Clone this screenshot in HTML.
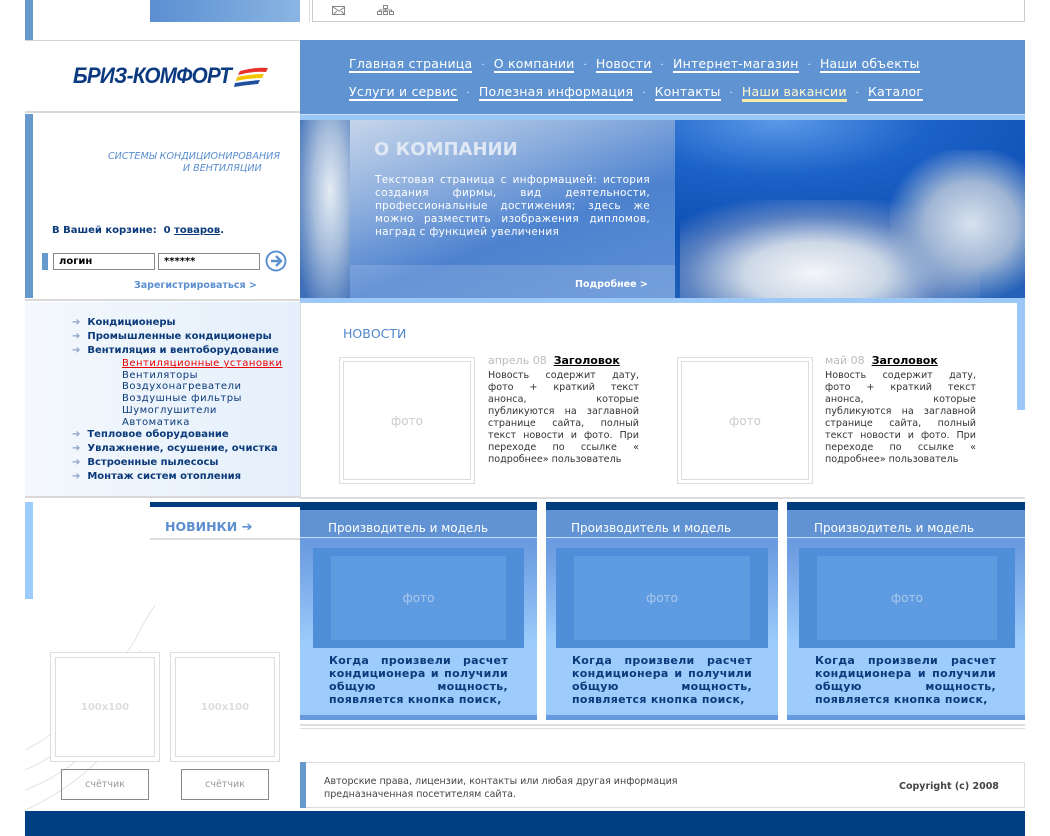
<!DOCTYPE html>
<html><head><meta charset="utf-8"><style>
*{margin:0;padding:0;box-sizing:border-box}
body{width:1050px;height:836px;background:#fff;position:relative;overflow:hidden;font-family:"DejaVu Sans","Liberation Sans",sans-serif;}
.a{position:absolute}
.nav{color:#fff;font-size:12.5px;white-space:nowrap;letter-spacing:.2px}
.nav span.l{border-bottom:2px solid #fff;padding-bottom:0}
.nav span.d{margin:0 9px;font-size:10px}
.menu{font-size:10px;font-weight:bold;color:#0b3a7a;line-height:14px}
.sub{font-size:10px;color:#0b3a7a;line-height:11.7px;letter-spacing:.5px}
.pt{font-size:11px;line-height:13px;color:#0b3a7a;font-weight:bold;text-align:justify;letter-spacing:.3px}
.nt{font-size:9.6px;line-height:12px;color:#333;text-align:justify}
.ph{height:28px;padding-top:10px;line-height:16px;border-bottom:1px solid #c8dcf5;color:#fff;font-size:12px;background:#6193d4}
</style></head><body>
<!-- top -->
<div class="a" style="left:25px;top:0;width:8px;height:40px;background:#6699cc"></div>
<div class="a" style="left:150px;top:0;width:150px;height:22px;background:linear-gradient(90deg,#5b8fd2,#8ab5e3)"></div>
<div class="a" style="left:312px;top:0;width:713px;height:22px;border:1px solid #ccc;border-top:none"></div>
<div class="a" style="left:309px;top:0;width:1px;height:22px;background:#ddd"></div>
<svg class="a" style="left:332px;top:6px" width="14" height="10"><rect x=".5" y=".5" width="12" height="8" fill="none" stroke="#888"/><path d="M1 1l6 4 6-4M1 9l4-4M13 9l-4-4" stroke="#888" fill="none"/></svg>
<svg class="a" style="left:377px;top:5px" width="18" height="11"><g fill="none" stroke="#888"><rect x="6.5" y=".5" width="4" height="3"/><rect x=".5" y="6.5" width="4" height="3"/><rect x="6.5" y="6.5" width="4" height="3"/><rect x="12.5" y="6.5" width="4" height="3"/><path d="M8.5 3.5v3M2.5 6.5V5h12v1.5"/></g></svg>
<div class="a" style="left:25px;top:40px;width:275px;height:1px;background:#d4d4d4"></div>
<!-- logo -->
<div class="a" style="left:73px;top:63px;font:italic bold 22px 'Liberation Sans',sans-serif;color:#0c3a80;letter-spacing:-.8px;transform:scaleX(.94);transform-origin:left;white-space:nowrap">БРИЗ-КОМФОРТ</div>
<svg class="a" style="left:234px;top:67px" width="36" height="22"><path d="M6 4 Q20 0 34 1 L32 5 Q18 4 4 8Z" fill="#e8322b"/><path d="M3 10 Q16 7 30 7 L28 11 Q16 11 2 14Z" fill="#f5c400"/><path d="M1 16 Q14 14 26 13 L24 17 Q12 18 0 20Z" fill="#1e4f9c"/></svg>
<div class="a" style="left:25px;top:111px;width:275px;height:2px;background:#d8d8d8"></div>
<!-- nav -->
<div class="a" style="left:300px;top:40px;width:725px;height:74px;background:#5f93d2"></div>
<div class="a" style="left:300px;top:114px;width:725px;height:6px;background:#9cc8f7;border-top:1px solid #c8e0fa"></div>
<div class="a nav" style="left:349px;top:56px"><span class="l">Главная страница</span><span class="d">·</span><span class="l">О компании</span><span class="d">·</span><span class="l">Новости</span><span class="d">·</span><span class="l">Интернет-магазин</span><span class="d">·</span><span class="l">Наши объекты</span></div>
<div class="a nav" style="left:349px;top:84px"><span class="l">Услуги и сервис</span><span class="d">·</span><span class="l">Полезная информация</span><span class="d">·</span><span class="l">Контакты</span><span class="d">·</span><span class="l" style="border-bottom:3px solid #f8eba8;color:#fff8d0">Наши вакансии</span><span class="d">·</span><span class="l">Каталог</span></div>
<!-- hero -->
<div class="a" style="left:300px;top:120px;width:725px;height:178px;background:radial-gradient(ellipse at 66% 0%,#5a9ae8 0%,#1d62c8 22%,#0e50b6 45%,#1d5db8 70%,#3a6cb4 100%)"></div>
<div class="a" style="left:680px;top:200px;width:300px;height:98px;background:radial-gradient(ellipse at 45% 75%,#f4f6fa 0%,#cdd8e6 30%,rgba(140,160,200,.6) 55%,rgba(40,100,190,0) 78%)"></div>
<div class="a" style="left:890px;top:150px;width:135px;height:148px;background:radial-gradient(ellipse at 60% 50%,#d8e2ee 0%,#a0b6d4 40%,rgba(60,110,190,0) 75%)"></div>
<div class="a" style="left:300px;top:120px;width:50px;height:178px;background:radial-gradient(ellipse at 60% 40%,#e4ecf4 0%,#a8bedc 40%,#3f6fb8 90%)"></div>
<div class="a" style="left:350px;top:120px;width:325px;height:178px;background:linear-gradient(160deg,#c6d5ea 0%,#8fb0de 30%,#4d82cf 60%,#5b8fd5 100%)"></div>
<div class="a" style="left:350px;top:265px;width:325px;height:33px;background:rgba(255,255,255,.15)"></div>
<div class="a" style="left:374px;top:139px;font:bold 18px 'DejaVu Sans',sans-serif;color:#dfe8f4">О КОМПАНИИ</div>
<div class="a" style="left:375px;top:174px;width:275px;font-size:10.5px;line-height:13px;color:#fff;text-align:justify;letter-spacing:.3px">Текстовая страница с информацией: история создания фирмы, вид деятельности, профессиональные достижения; здесь же можно разместить изображения дипломов, наград с функцией увеличения</div>
<div class="a" style="left:575px;top:279px;font:bold 9.5px 'DejaVu Sans',sans-serif;color:#fff">Подробнее &gt;</div>
<div class="a" style="left:300px;top:298px;width:725px;height:5px;background:#9cc8f7"></div>
<!-- left panel -->
<div class="a" style="left:25px;top:114px;width:8px;height:184px;background:#6699cc"></div>
<div class="a" style="left:100px;top:151px;font:italic 9.6px 'DejaVu Sans',sans-serif;color:#5a8ed0;text-align:right;width:180px;line-height:12px">СИСТЕМЫ КОНДИЦИОНИРОВАНИЯ<br>И ВЕНТИЛЯЦИИ&nbsp;&nbsp;&nbsp;&nbsp;&nbsp;&nbsp;</div>
<div class="a" style="left:52px;top:225px;font:bold 10px 'DejaVu Sans',sans-serif;color:#0b3a7a">В Вашей корзине:&nbsp; 0 <u>товаров</u>.</div>
<div class="a" style="left:42px;top:253px;width:6px;height:17px;background:#6699cc"></div>
<div class="a" style="left:53px;top:253px;width:102px;height:17px;border:1px solid #888;font:bold 10px 'DejaVu Sans',sans-serif;padding:2px 5px;color:#000">логин</div>
<div class="a" style="left:158px;top:253px;width:102px;height:17px;border:1px solid #888;font:bold 10px 'DejaVu Sans',sans-serif;padding:2px 5px;color:#000">******</div>
<svg class="a" style="left:265px;top:250px" width="22" height="22"><circle cx="11" cy="11" r="9.5" fill="#fff" stroke="#5b8fd0" stroke-width="2"/><path d="M6 11h9M11 6l5 5-5 5" stroke="#5b8fd0" stroke-width="2.4" fill="none"/></svg>
<div class="a" style="left:134px;top:280px;font:bold 9.5px 'DejaVu Sans',sans-serif;color:#5b8fd0">Зарегистрироваться &gt;</div>
<div class="a" style="left:25px;top:299px;width:275px;height:2px;background:#d8d8d8"></div>
<!-- menu -->
<div class="a" style="left:25px;top:302px;width:275px;height:194px;background:linear-gradient(90deg,#f4f8fd,#e4effb)"></div>
<div class="a" style="left:25px;top:496px;width:275px;height:2px;background:#d8d8d8"></div>
<div class="a menu" style="left:72px;top:316px;width:230px">
<div><span style="color:#8aa4c8">➔</span>&nbsp; Кондиционеры</div>
<div><span style="color:#8aa4c8">➔</span>&nbsp; Промышленные кондиционеры</div>
<div><span style="color:#8aa4c8">➔</span>&nbsp; Вентиляция и вентоборудование</div>
<div class="sub" style="padding-left:50px;font-weight:normal"><div style="color:#e00;text-decoration:underline">Вентиляционные установки</div><div>Вентиляторы</div><div>Воздухонагреватели</div><div>Воздушные фильтры</div><div>Шумоглушители</div><div>Автоматика</div></div>
<div><span style="color:#8aa4c8">➔</span>&nbsp; Тепловое оборудование</div>
<div><span style="color:#8aa4c8">➔</span>&nbsp; Увлажнение, осушение, очистка</div>
<div><span style="color:#8aa4c8">➔</span>&nbsp; Встроенные пылесосы</div>
<div><span style="color:#8aa4c8">➔</span>&nbsp; Монтаж систем отопления</div>
</div>
<!-- news -->
<div class="a" style="left:300px;top:303px;width:1px;height:195px;background:#ddd"></div>
<div class="a" style="left:1017px;top:303px;width:8px;height:107px;background:#9cc8f7"></div>
<div class="a" style="left:343px;top:326px;font-size:12.5px;color:#4f86cc">НОВОСТИ</div>
<div class="a" style="left:339px;top:357px;width:136px;height:127px;border:1px solid #ddd;padding:3px"><div style="border:1px solid #ddd;height:100%;display:flex;align-items:center;justify-content:center;color:#ccc;font-size:12px">фото</div></div>
<div class="a" style="left:677px;top:357px;width:136px;height:127px;border:1px solid #ddd;padding:3px"><div style="border:1px solid #ddd;height:100%;display:flex;align-items:center;justify-content:center;color:#ccc;font-size:12px">фото</div></div>
<div class="a" style="left:488px;top:354px;font-size:11px;color:#bbb;white-space:nowrap">апрель 08&nbsp; <b style="color:#000;text-decoration:underline">Заголовок</b></div>
<div class="a" style="left:825px;top:354px;font-size:11px;color:#bbb;white-space:nowrap">май 08&nbsp; <b style="color:#000;text-decoration:underline">Заголовок</b></div>
<div class="a nt" style="left:488px;top:370px;width:151px">Новость содержит дату, фото + краткий текст анонса, которые публикуются на заглавной странице сайта, полный текст новости и фото. При переходе по ссылке « подробнее» пользователь</div>
<div class="a nt" style="left:825px;top:370px;width:151px">Новость содержит дату, фото + краткий текст анонса, которые публикуются на заглавной странице сайта, полный текст новости и фото. При переходе по ссылке « подробнее» пользователь</div>
<div class="a" style="left:300px;top:497px;width:725px;height:2px;background:#ddd"></div>
<!-- products -->
<div class="a" style="left:25px;top:502px;width:8px;height:97px;background:#9ccbfc"></div>
<div class="a" style="left:150px;top:502px;width:150px;height:5px;background:#003d7f"></div>
<div class="a" style="left:165px;top:519px;font:bold 12.5px 'DejaVu Sans',sans-serif;color:#5b8fd0">НОВИНКИ <span style="font-size:13px">➔</span></div>
<div class="a" style="left:150px;top:538px;width:150px;height:2px;background:#ddd"></div>
<div class="a" style="left:300px;top:724px;width:725px;height:2px;background:#ddd"></div>
<div class="a" style="left:300px;top:728px;width:725px;height:1px;background:#ddd"></div>
<!-- left thumbs -->
<svg class="a" style="left:25px;top:600px" width="275" height="211"><g fill="none" stroke="#e2e2e2"><path d="M0 150 Q60 120 110 40 Q120 20 130 5"/><path d="M0 170 Q70 140 115 50"/><path d="M0 190 Q80 160 125 60"/><path d="M0 210 Q90 170 135 70"/></g></svg>
<div class="a" style="left:50px;top:652px;width:110px;height:110px;border:1px solid #ddd;padding:4px;background:#fff"><div style="border:1px solid #ddd;height:100%;display:flex;align-items:center;justify-content:center;color:#ddd;font:bold 10px 'DejaVu Sans',sans-serif">100x100</div></div>
<div class="a" style="left:170px;top:652px;width:110px;height:110px;border:1px solid #ddd;padding:4px;background:#fff"><div style="border:1px solid #ddd;height:100%;display:flex;align-items:center;justify-content:center;color:#ddd;font:bold 10px 'DejaVu Sans',sans-serif">100x100</div></div>
<div class="a" style="left:61px;top:769px;width:88px;height:31px;border:1px solid #888;text-align:center;line-height:29px;font-size:9.5px;color:#999">счётчик</div>
<div class="a" style="left:181px;top:769px;width:88px;height:31px;border:1px solid #888;text-align:center;line-height:29px;font-size:9.5px;color:#999">счётчик</div>
<!-- footer -->
<div class="a" style="left:300px;top:762px;width:725px;height:46px;border:1px solid #ddd"></div>
<div class="a" style="left:300px;top:762px;width:6px;height:46px;background:#6699cc"></div>
<div class="a" style="left:324px;top:775px;font-size:9.5px;line-height:13px;color:#444">Авторские права, лицензии, контакты или любая другая информация<br>предназначенная посетителям сайта.</div>
<div class="a" style="left:899px;top:781px;font:bold 9.5px 'DejaVu Sans',sans-serif;color:#444">Copyright (c) 2008</div>
<div class="a" style="left:25px;top:811px;width:1000px;height:25px;background:#003f82"></div>
<div class="a" style="left:300px;top:502px;width:237px;height:218px;background:linear-gradient(#6b9be0 20%,#9ccbfc 65%)"><div style="height:8px;background:#003d7f"></div><div class="ph" style="padding-left:28px">Производитель и модель</div><div style="margin:10px 13px 0;height:100px;background:#4f8ed8;padding:8px 18px"><div style="background:#5f9be0;height:100%;display:flex;align-items:center;justify-content:center;color:#a9c8ee;font-size:12px">фото</div></div><div class="pt" style="margin:6px 29px 0">Когда произвели расчет кондиционера и получили общую мощность, появляется кнопка поиск,</div></div>
<div class="a" style="left:300px;top:715px;width:237px;height:5px;background:#6699dd"></div>
<div class="a" style="left:546px;top:502px;width:232px;height:218px;background:linear-gradient(#6b9be0 20%,#9ccbfc 65%)"><div style="height:8px;background:#003d7f"></div><div class="ph" style="padding-left:25px">Производитель и модель</div><div style="margin:10px 10px 0;height:100px;background:#4f8ed8;padding:8px 18px"><div style="background:#5f9be0;height:100%;display:flex;align-items:center;justify-content:center;color:#a9c8ee;font-size:12px">фото</div></div><div class="pt" style="margin:6px 26px 0">Когда произвели расчет кондиционера и получили общую мощность, появляется кнопка поиск,</div></div>
<div class="a" style="left:546px;top:715px;width:232px;height:5px;background:#6699dd"></div>
<div class="a" style="left:787px;top:502px;width:238px;height:218px;background:linear-gradient(#6b9be0 20%,#9ccbfc 65%)"><div style="height:8px;background:#003d7f"></div><div class="ph" style="padding-left:27px">Производитель и модель</div><div style="margin:10px 10px 0 12px;height:100px;background:#4f8ed8;padding:8px 18px"><div style="background:#5f9be0;height:100%;display:flex;align-items:center;justify-content:center;color:#a9c8ee;font-size:12px">фото</div></div><div class="pt" style="margin:6px 29px 0 28px">Когда произвели расчет кондиционера и получили общую мощность, появляется кнопка поиск,</div></div>
<div class="a" style="left:787px;top:715px;width:238px;height:5px;background:#6699dd"></div>
</body></html>
